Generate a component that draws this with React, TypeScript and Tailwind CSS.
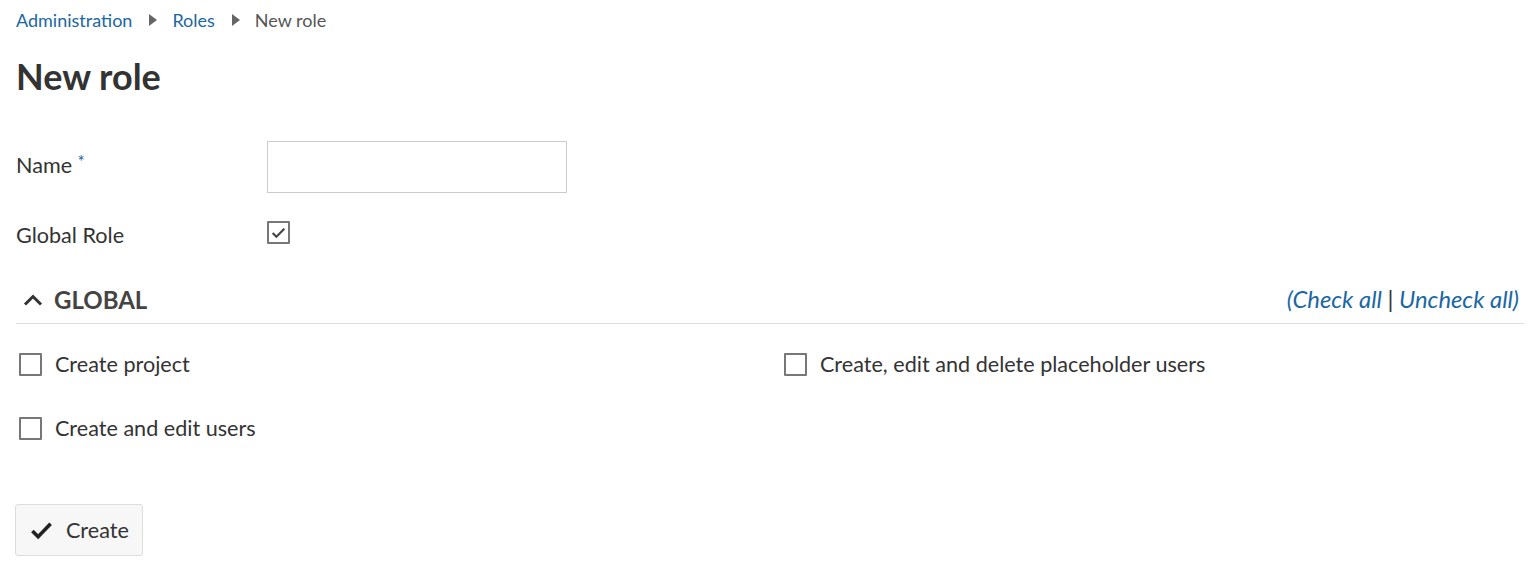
const Box = ({ checked = false }: { checked?: boolean }) => (
  <span className="inline-flex items-center justify-center w-[23px] h-[23px] border-2 border-[#777] bg-white shrink-0 rounded-[1px]">
    {checked && (
      <svg viewBox="0 0 16 16" className="w-[17px] h-[17px]" fill="none" stroke="#444" strokeWidth="2">
        <path d="M2.5 8.5l3.5 3.5 7.5-7.5" />
      </svg>
    )}
  </span>
);

const Perm = ({ label }: { label: string }) => (
  <label className="flex items-center gap-[13px] h-[24px]">
    <Box />
    <span className="text-[21.6px] text-[#333]">{label}</span>
  </label>
);

const Arrow = () => (
  <svg viewBox="0 0 8 12" className="w-[8px] h-[12px] ml-[17px] mr-[15px]" fill="#666">
    <path d="M0 0l8 6-8 6z" />
  </svg>
);

const App = () => {
  return (
    <div className="min-h-[570px] bg-white px-4 pt-[8px] font-['Lato',sans-serif] text-[#333]">
      {/* Breadcrumb */}
      <nav className="flex items-center text-[18px] h-[24px]">
        <a className="text-[#1a67a3]">Administration</a>
        <Arrow />
        <a className="text-[#1a67a3]">Roles</a>
        <Arrow />
        <span className="text-[#555]">New role</span>
      </nav>

      <h1 className="mt-[24px] text-[36px] font-bold leading-[40px] text-[#333]">New role</h1>

      {/* Form */}
      <div className="mt-[45px] flex items-center h-[52px]">
        <div className="w-[251px] text-[21.6px] -mt-[3px]">
          Name <span className="text-[#1a67a3] text-[17px] align-top">*</span>
        </div>
        <input className="w-[300px] h-[52px] border border-[#ccc] outline-none px-3" />
      </div>
      <div className="mt-[29px] flex items-center h-[24px]">
        <div className="w-[251px] text-[21.6px] mt-[2px]">Global Role</div>
        <span className="-mt-px">
          <Box checked />
        </span>
      </div>

      {/* Section */}
      <div className="mt-[37px] border-b border-[#ddd] pb-[6px]">
        <div className="flex items-center justify-between h-[34px]">
          <div className="flex items-center gap-[11px] pl-[7px]">
            <svg viewBox="0 0 20 12" className="w-[20px] h-[12px]" fill="none" stroke="#333" strokeWidth="3">
              <path d="M2 10.5l8-8 8 8" />
            </svg>
            <span className="text-[24px] font-bold text-[#444]">GLOBAL</span>
          </div>
          <div className="text-[23.8px] italic text-[#1a67a3] pr-[5px]">
            (<a>Check all</a> <span className="text-[#333] not-italic">|</span> <a>Uncheck all</a>)
          </div>
        </div>
      </div>

      <div className="mt-[28px] grid grid-cols-[765px_1fr] gap-y-[40px] pl-[3px]">
        <Perm label="Create project" />
        <Perm label="Create, edit and delete placeholder users" />
        <Perm label="Create and edit users" />
      </div>

      <button className="mt-[64px] -ml-px flex items-center gap-[13px] h-[52px] pl-[14px] pr-[13px] bg-[#f7f7f7] border border-[#ddd] rounded-[3px] text-[21.6px] text-[#333]">
        <svg viewBox="0 0 24 24" className="w-[23px] h-[23px]" fill="none" stroke="#222" strokeWidth="3.8">
          <path d="M2.5 12.5l6 6L21.5 5" />
        </svg>
        Create
      </button>
    </div>
  );
};

export default App;
